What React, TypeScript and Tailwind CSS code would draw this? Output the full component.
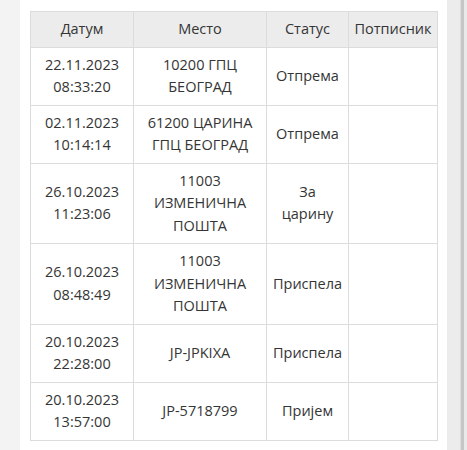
const rows = [
  { date: "22.11.2023", time: "08:33:20", place: ["10200 ГПЦ", "БЕОГРАД"], status: ["Отпрема"] },
  { date: "02.11.2023", time: "10:14:14", place: ["61200 ЦАРИНА", "ГПЦ БЕОГРАД"], status: ["Отпрема"] },
  { date: "26.10.2023", time: "11:23:06", place: ["11003", "ИЗМЕНИЧНА", "ПОШТА"], status: ["За", "царину"] },
  { date: "26.10.2023", time: "08:48:49", place: ["11003", "ИЗМЕНИЧНА", "ПОШТА"], status: ["Приспела"] },
  { date: "20.10.2023", time: "22:28:00", place: ["JP-JPKIXA"], status: ["Приспела"] },
  { date: "20.10.2023", time: "13:57:00", place: ["JP-5718799"], status: ["Пријем"] },
]

export default function App() {
  return (
    <div
      className="flex h-[450px] w-[467px] overflow-hidden bg-white text-[#353535]"
      style={{ fontFamily: '"Open Sans", "Noto Sans", sans-serif' }}
    >
      {/* лева трака */}
      <div className="w-[20px] shrink-0 bg-[#f3f3f3]" />

      <div className="w-[427px] shrink-0 bg-white pl-[10px] pt-[11px]">
        <table className="w-[407px] table-fixed border-collapse text-center text-[14.5px] leading-[22.5px]">
          <colgroup>
            <col className="w-[103px]" />
            <col className="w-[133px]" />
            <col className="w-[82px]" />
            <col className="w-[89px]" />
          </colgroup>
          <thead>
            <tr className="bg-[#ececec]">
              <th className="border border-[#dcdcdc] px-1 py-[6px] font-normal">Датум</th>
              <th className="border border-[#dcdcdc] px-1 py-[6px] font-normal">Место</th>
              <th className="border border-[#dcdcdc] px-1 py-[6px] font-normal">Статус</th>
              <th className="border border-[#dcdcdc] px-1 py-[6px] font-normal">Потписник</th>
            </tr>
          </thead>
          <tbody>
            {rows.map((r, i) => (
              <tr key={i}>
                <td className="border border-[#dcdcdc] px-1 py-[6px] align-middle">
                  <div>{r.date}</div>
                  <div>{r.time}</div>
                </td>
                <td className="border border-[#dcdcdc] px-1 py-[6px] align-middle">
                  {r.place.map((p, j) => (
                    <div key={j} className="whitespace-nowrap">{p}</div>
                  ))}
                </td>
                <td className="border border-[#dcdcdc] px-1 py-[6px] align-middle">
                  {r.status.map((s, j) => (
                    <div key={j}>{s}</div>
                  ))}
                </td>
                <td className="border border-[#dcdcdc] px-1 py-[6px]" />
              </tr>
            ))}
          </tbody>
        </table>
      </div>

      {/* десна трака за скроловање */}
      <div className="flex w-[20px] shrink-0">
        <div className="w-[13px] bg-[#ececec]" />
        <div className="w-[1px] bg-[#dedede]" />
        <div className="w-[3px] bg-[#c6c6c6]" />
        <div className="w-[3px] bg-[#e9e9e9]" />
      </div>
    </div>
  )
}
